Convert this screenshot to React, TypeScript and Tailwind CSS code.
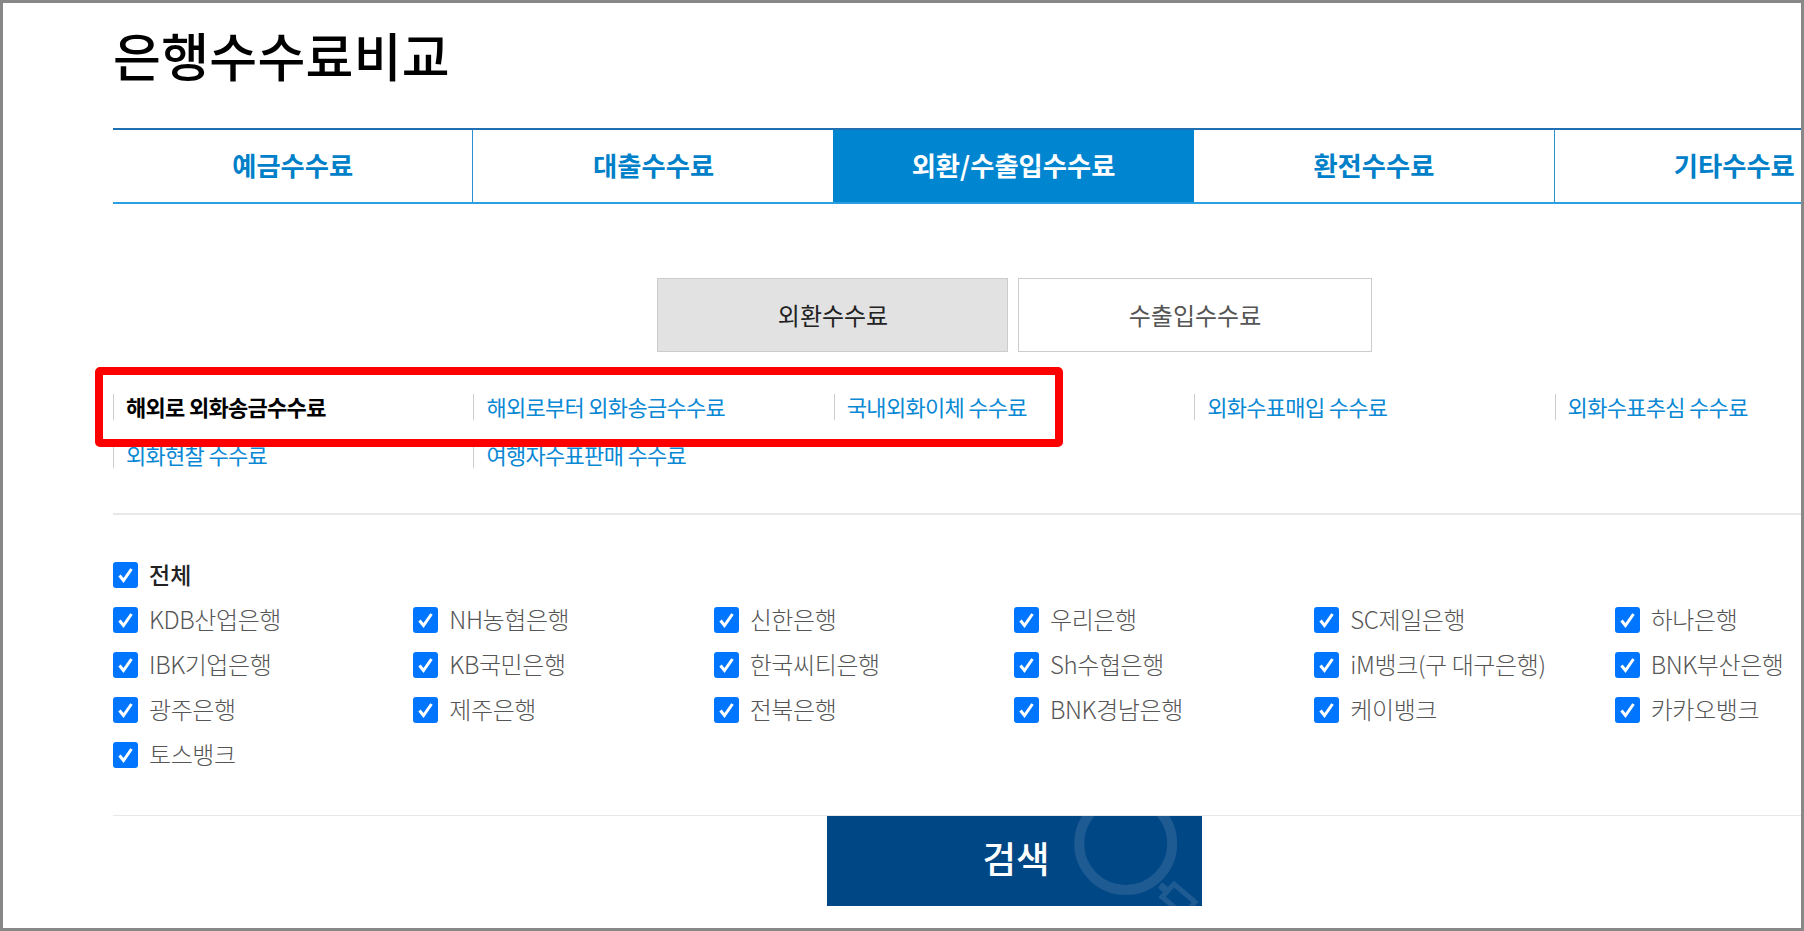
import React from 'react';

const tabs = ['예금수수료', '대출수수료', '외환/수출입수수료', '환전수수료', '기타수수료'];

const links = [
  '해외로 외화송금수수료',
  '해외로부터 외화송금수수료',
  '국내외화이체 수수료',
  '외화수표매입 수수료',
  '외화수표추심 수수료',
  '외화현찰 수수료',
  '여행자수표판매 수수료',
];

const banks = [
  'KDB산업은행', 'NH농협은행', '신한은행', '우리은행', 'SC제일은행', '하나은행',
  'IBK기업은행', 'KB국민은행', '한국씨티은행', 'Sh수협은행', 'iM뱅크(구 대구은행)', 'BNK부산은행',
  '광주은행', '제주은행', '전북은행', 'BNK경남은행', '케이뱅크', '카카오뱅크',
  '토스뱅크',
];

const CheckBox = () => (
  <span className="flex h-[26px] w-[25px] shrink-0 items-center justify-center rounded-[3px] bg-[#0075ff]">
    <svg width="19" height="20" viewBox="0 0 19 20" fill="none">
      <path d="M3.5 10.5 L7.5 15.5 L15.5 4" stroke="#fff" strokeWidth="3" />
    </svg>
  </span>
);

const App: React.FC = () => {
  return (
    <div className="relative h-[931px] w-[1804px] overflow-hidden border-x-[3px] border-y-[3px] border-[#888888] bg-white font-['Noto_Sans_CJK_KR','Noto_Sans',sans-serif]">
      <div className="ml-[110px] w-[1802px]">
        <h1 className="h-[125px] pt-[17px] text-[52px] leading-[70px] font-medium tracking-[0.3px] text-black">은행수수료비교</h1>

        <div className="grid h-[76px] grid-cols-5 border-t-2 border-b-2 border-t-[#1f6fb2] border-b-[#2a9fe0]">
          {tabs.map((t, i) => (
            <div
              key={t}
              className={
                i === 2
                  ? '-ml-px flex items-center justify-center bg-[#0086d1] pb-[3px] text-[26.3px] font-bold text-white'
                  : `flex items-center justify-center pb-[3px] text-[26.3px] font-bold text-[#0080c8] ${i === 1 ? '' : 'border-r border-[#2a8fd0]'}`
              }
            >
              {t}
            </div>
          ))}
        </div>

        <div className="mt-[74px] flex justify-center gap-[10px]">
          <div className="flex h-[74px] w-[351px] items-center justify-center border border-[#cccccc] bg-[#e2e2e2] pl-[2px] text-[24px] text-[#222222]">외환수수료</div>
          <div className="flex h-[74px] w-[354px] items-center justify-center border border-[#cccccc] bg-white pl-[1px] text-[24px] text-[#555555]">수출입수수료</div>
        </div>

        <div className="mt-[42px] grid grid-cols-5 gap-y-[22px]">
          {links.map((l, i) => (
            <div
              key={l}
              className={`h-[26px] border-l border-[#cccccc] pl-[12px] text-[22px] leading-[24px] tracking-[-0.7px] whitespace-nowrap ${i === 0 ? 'font-bold text-black' : 'text-[#0a88d4]'}`}
            >
              {l}
            </div>
          ))}
        </div>

        <div className="mt-[45px] border-t-2 border-[#e8e8e8] pt-[47px]">
          <label className="flex items-center gap-[11px] text-[23px] leading-[26px] font-medium text-[#222222]">
            <CheckBox />
            <span className="-mt-[2px]">전체</span>
          </label>
          <div className="mt-[19px] grid grid-cols-6 gap-y-[19px]">
            {banks.map(b => (
              <label key={b} className="flex items-center gap-[11px] text-[24px] leading-[26px] font-light tracking-[-0.4px] whitespace-nowrap text-[#555555]">
                <CheckBox />
                <span className="-mt-[2px]">{b}</span>
              </label>
            ))}
          </div>
        </div>

        <div className="mt-[47px] border-t border-[#e8e8e8]">
          <button className="relative mx-auto flex h-[90px] w-[375px] items-center justify-center overflow-hidden bg-[#004785] pb-[5px] pl-[4px] text-[36.5px] font-medium text-white">
            <svg className="absolute top-0 left-0" width="375" height="90" viewBox="0 0 375 90" fill="none">
              <circle cx="298.7" cy="27.5" r="46.5" stroke="#1e5b93" strokeWidth="10" />
              <path d="M333 69 L340 75" stroke="#1e5b93" strokeWidth="7" />
              <path d="M347 68 L335 81 L357 99 L368 86 Z" stroke="#1e5b93" strokeWidth="5" />
            </svg>
            <span className="relative">검색</span>
          </button>
        </div>
      </div>

      {/* annotation box over the first three links */}
      <div className="absolute top-[364px] left-[92px] h-[80px] w-[968px] rounded-[5px] border-[8px] border-[#ff0000]" />
    </div>
  );
};

export default App;
